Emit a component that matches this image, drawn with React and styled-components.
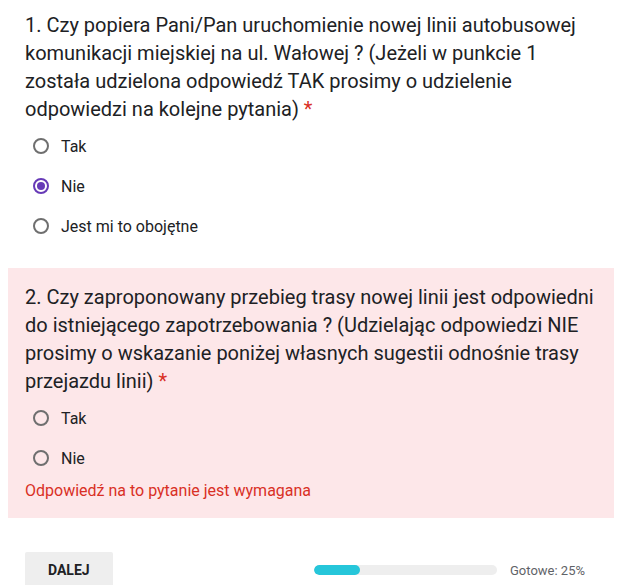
import React from "react";
import styled, { createGlobalStyle } from "styled-components";

const GlobalStyle = createGlobalStyle`
  html, body {
    margin: 0;
    padding: 0;
    background: #ffffff;
  }
  body {
    font-family: Roboto, "Liberation Sans", Arial, sans-serif;
    color: #202124;
  }
`;

const questions = [
  {
    id: 1,
    lines: [
      "1. Czy popiera Pani/Pan uruchomienie nowej linii autobusowej",
      "komunikacji miejskiej na ul. Wałowej ? (Jeżeli w punkcie 1",
      "została udzielona odpowiedź TAK prosimy o udzielenie",
      "odpowiedzi na kolejne pytania)",
    ],
    options: ["Tak", "Nie", "Jest mi to obojętne"],
    selected: "Nie",
    error: false,
  },
  {
    id: 2,
    lines: [
      "2. Czy zaproponowany przebieg trasy nowej linii jest odpowiedni",
      "do istniejącego zapotrzebowania ? (Udzielając odpowiedzi NIE",
      "prosimy o wskazanie poniżej własnych sugestii odnośnie trasy",
      "przejazdu linii)",
    ],
    options: ["Tak", "Nie"],
    selected: null,
    error: true,
  },
];

const progress = 25;

export default function App() {
  return (
    <>
      <GlobalStyle />
      <Page>
        {questions.map((q) => (
          <Question key={q.id} $error={q.error}>
            <Title>
              {q.lines.map((line, i) => (
                <Line key={i}>
                  {line}
                  {i === q.lines.length - 1 && <Required> *</Required>}
                </Line>
              ))}
            </Title>
            <Options>
              {q.options.map((opt) => (
                <Option key={opt}>
                  <Radio $checked={q.selected === opt} />
                  <span>{opt}</span>
                </Option>
              ))}
            </Options>
            {q.error && <ErrorText>Odpowiedź na to pytanie jest wymagana</ErrorText>}
          </Question>
        ))}
        <Footer>
          <NextButton>Dalej</NextButton>
          <ProgressGroup>
            <Track>
              <Fill style={{ width: `${progress}%` }} />
            </Track>
            <ProgressLabel>Gotowe: {progress}%</ProgressLabel>
          </ProgressGroup>
        </Footer>
      </Page>
    </>
  );
}

const Page = styled.div`
  width: 621px;
  padding: 11px 7px 0 8px;
  box-sizing: border-box;
  display: flex;
  flex-direction: column;
  gap: 22px;
`;

const Question = styled.section`
  padding: ${(p) => (p.$error ? "15px 17px 17px" : "0 17px")};
  background: ${(p) => (p.$error ? "#fde7e9" : "transparent")};
`;

const Title = styled.div`
  font-size: 20px;
  line-height: 28px;
  color: #202124;
  margin-bottom: 3px;
`;

const Line = styled.span`
  display: block;
  white-space: nowrap;
`;

const Required = styled.span`
  color: #d93025;
`;

const Options = styled.div`
  display: flex;
  flex-direction: column;
`;

const Option = styled.label`
  display: flex;
  align-items: center;
  gap: 12px;
  height: 40px;
  padding-left: 8px;
  font-size: 16px;
  color: #202124;
`;

const Radio = styled.span`
  position: relative;
  width: 16px;
  height: 16px;
  box-sizing: border-box;
  border-radius: 50%;
  border: 2px solid ${(p) => (p.$checked ? "#673ab7" : "#6f6f6f")};
  flex-shrink: 0;
  &::after {
    content: "";
    display: ${(p) => (p.$checked ? "block" : "none")};
    position: absolute;
    top: 2px;
    left: 2px;
    width: 8px;
    height: 8px;
    border-radius: 50%;
    background: #673ab7;
  }
`;

const ErrorText = styled.div`
  margin-top: 3px;
  font-size: 16px;
  line-height: 20px;
  color: #d93025;
`;

const Footer = styled.div`
  display: flex;
  align-items: center;
  justify-content: space-between;
  padding: 12px 29px 0 17px;
`;

const NextButton = styled.button`
  height: 36px;
  padding: 0 23px;
  border: none;
  border-radius: 2px;
  background: #eeeeee;
  font-family: Roboto, "Liberation Sans", Arial, sans-serif;
  font-size: 14px;
  font-weight: 700;
  text-transform: uppercase;
  color: #202124;
`;

const ProgressGroup = styled.div`
  display: flex;
  align-items: center;
  gap: 13px;
`;

const Track = styled.div`
  width: 183px;
  height: 10px;
  border-radius: 5px;
  background: #eeeeee;
  overflow: hidden;
`;

const Fill = styled.div`
  height: 100%;
  border-radius: 5px;
  background: #26c6da;
`;

const ProgressLabel = styled.span`
  font-size: 13px;
  color: #5f6368;
`;
